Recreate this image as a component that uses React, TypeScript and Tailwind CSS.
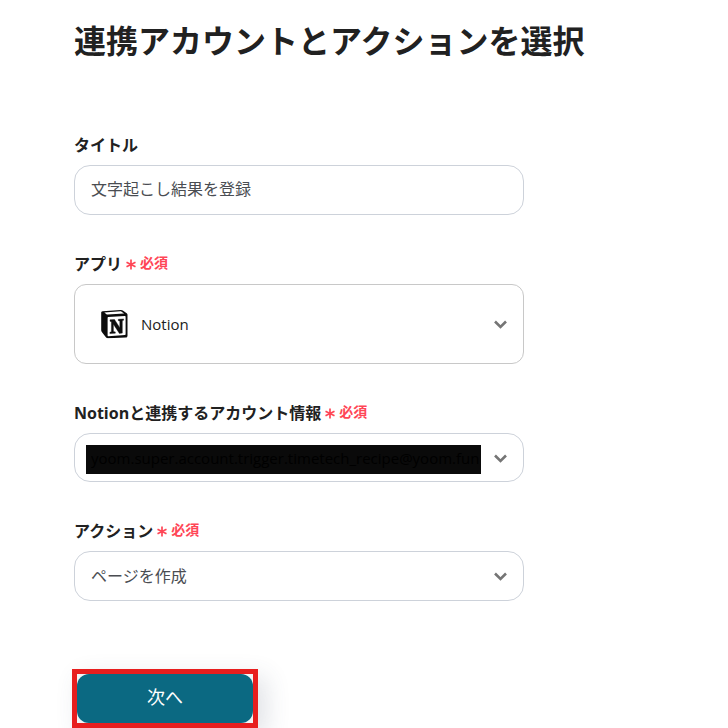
import type { ReactNode } from "react";

const borderGray = "border-[#cdd2da]";

function Chevron() {
  return (
    <svg
      viewBox="0 0 14 10"
      className="pointer-events-none absolute right-4 top-1/2 h-[10px] w-[14px] -translate-y-1/2"
      fill="none"
      stroke="#757575"
      strokeWidth="2.6"
      aria-hidden="true"
    >
      <path d="M1 2.500 6.500 7.900 12 2.500" />
    </svg>
  );
}

function NotionLogo() {
  return (
    <svg
      viewBox="0 0 28 29"
      className="pointer-events-none absolute left-[26px] top-1/2 h-[29px] w-7 -translate-y-1/2"
      aria-hidden="true"
    >
      <path
        d="M2.600 1.800 20.600.4c1-.1 1.500.1 2.200.6l3.900 2.700c.6.4.8.8.8 1.600v20.600c0 1.300-.5 2-1.800 2.100L8.200 28.700c-1 .1-1.700-.2-2.300-1L2 22.800c-.5-.7-.8-1.300-.8-2V3.200c0-.8.500-1.300 1.400-1.400Z"
        fill="#0c0c0c"
      />
      <path d="M4.300 3 20.400 1.800c.5 0 .8.1 1.200.4l2.500 1.700L7.600 5c-.6 0-1-.1-1.400-.5L4.300 3Z" fill="#fff" />
      <path d="M8.400 7.500 24.900 6.400c.5 0 .7.300.7.800v17.600c0 .5-.2.800-.7.800L8.300 26.700c-.5 0-.7-.2-.7-.7V8.300c0-.5.300-.8.800-.8Z" fill="#fff" />
      <path
        d="m10 10.300 4.500-.3 5.300 8.200v-6.700l-1.500-.3V9.800l5.300-.4v1.300l-1.300.6v12.300l-2.900.3-6-9.100v7.200l1.900.4v1.300l-5.400.4v-1.300l1.500-.6V12.200L10 11.800Z"
        fill="#0c0c0c"
        stroke="#0c0c0c"
        strokeWidth="0.4"
      />
    </svg>
  );
}

type FieldProps = {
  id: string;
  label: string;
  required?: boolean;
  children: ReactNode;
};

function Field({ id, label, required, children }: FieldProps) {
  return (
    <div>
      <label htmlFor={id} className="mb-2 block text-base leading-6 font-bold whitespace-nowrap">
        {label}
        {required && (
          <span className="ml-1 inline-flex items-center gap-1 text-sm leading-5 font-semibold text-[#ff4656]">
            <svg viewBox="0 0 10 11" className="mt-1 h-[11px] w-[10px]" stroke="currentColor" strokeWidth="1.7" aria-hidden="true">
              <path d="M5 .5v10M.5 3.200l9 4.600M9.500 3.200l-9 4.600" />
            </svg>
            必須
          </span>
        )}
      </label>
      <div className="relative">{children}</div>
    </div>
  );
}

export default function App() {
  return (
    <main className="bg-white pt-[17px] pr-4 pl-[74px] font-['Open_Sans','Noto_Sans_CJK_JP',sans-serif] text-[#212121]">
      <h1 className="text-[32px] leading-[48px] font-bold">連携アカウントとアクションを選択</h1>

      <form className="mt-[68px] max-w-[450px]" onSubmit={(e) => e.preventDefault()}>
        <div className="flex flex-col gap-[37px]">
          <Field id="title" label="タイトル">
            <input
              id="title"
              type="text"
              defaultValue="文字起こし結果を登録"
              className={`block h-[50px] w-full rounded-2xl border ${borderGray} px-4 pb-1 text-base text-[#4a4d52]`}
            />
          </Field>

          <Field id="app" label="アプリ" required>
            <select
              id="app"
              className="block h-20 w-full appearance-none rounded-xl border border-[#c8c8c8] bg-white pr-10 pl-[66px] text-[15px]"
            >
              <option>Notion</option>
            </select>
            <NotionLogo />
            <Chevron />
          </Field>

          <Field id="account" label="Notionと連携するアカウント情報" required>
            <span className="absolute top-3 right-[43px] left-3 h-[29px] bg-[#0a0a0a]" />
            <select
              id="account"
              className={`relative block h-[49px] w-full appearance-none rounded-2xl border ${borderGray} bg-transparent pt-0.5 pr-10 pl-4 text-[15px] text-black`}
            >
              <option>yoom.super.account.trigger.timetech_recipe@yoom.fun</option>
            </select>
            <Chevron />
          </Field>

          <Field id="action" label="アクション" required>
            <select
              id="action"
              className={`block h-[50px] w-full appearance-none rounded-2xl border ${borderGray} bg-white pr-10 pl-4 text-base text-[#4a4d52]`}
            >
              <option>ページを作成</option>
            </select>
            <Chevron />
          </Field>
        </div>

        <div className="mt-[68px] -ml-0.5 w-fit border-5 border-[#e81e1e] bg-[#f1f4f6] shadow-[8px_8px_24px_rgba(60,75,100,0.16)]">
          <button type="submit" className="block h-[49px] w-44 rounded-xl bg-[#0b6982] pb-1 text-lg text-white">
            次へ
          </button>
        </div>
      </form>
    </main>
  );
}
